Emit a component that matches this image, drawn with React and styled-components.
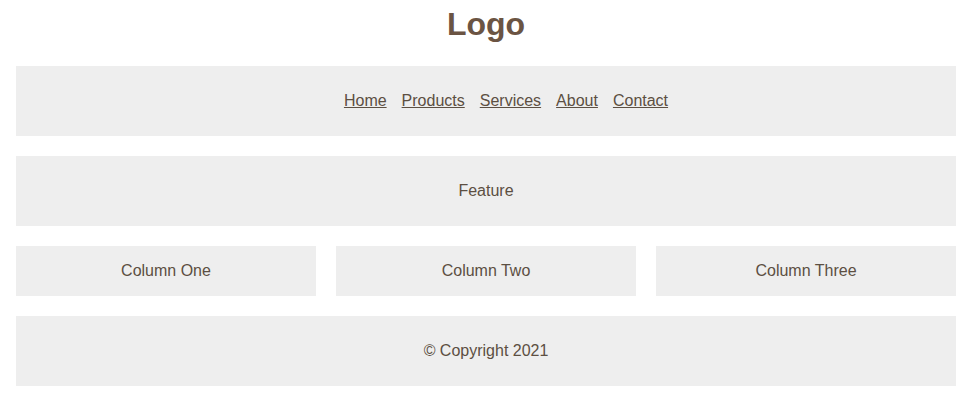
import styled, { createGlobalStyle } from "styled-components";

const GlobalStyle = createGlobalStyle`
  body {
    margin: 0;
    background: #fff;
    font-family: "Liberation Sans", Arial, sans-serif;
    color: #5c4f42;
  }
`;

const Page = styled.div`
  width: 940px;
  margin: 0 16px;
  padding-top: 6px;
  display: flex;
  flex-direction: column;
  gap: 20px;
`;

const Logo = styled.h1`
  margin: 0 0 3px;
  font-size: 32px;
  line-height: 37px;
  font-weight: bold;
  text-align: center;
  color: #6b5443;
`;

const Panel = styled.div`
  background: #eeeeee;
  height: ${props => props.h || 70}px;
  display: flex;
  align-items: center;
  justify-content: center;
  font-size: 16px;
`;

const Menu = styled.ul`
  list-style: none;
  margin: 0;
  padding: 0 0 0 40px;
  display: flex;
  gap: 15px;
`;

const NavLink = styled.a`
  color: #5c4f42;
  text-decoration: underline;
  font-size: 16px;
`;

const Columns = styled.div`
  display: grid;
  grid-template-columns: repeat(3, 1fr);
  gap: 20px;
`;

function App() {
  const links = ["Home", "Products", "Services", "About", "Contact"];
  return (
    <>
      <GlobalStyle />
      <Page>
        <Logo>Logo</Logo>
        <Panel>
          <Menu>
            {links.map(l => (
              <li key={l}>
                <NavLink href="#">{l}</NavLink>
              </li>
            ))}
          </Menu>
        </Panel>
        <Panel>Feature</Panel>
        <Columns>
          <Panel h={50}>Column One</Panel>
          <Panel h={50}>Column Two</Panel>
          <Panel h={50}>Column Three</Panel>
        </Columns>
        <Panel>© Copyright 2021</Panel>
      </Page>
    </>
  );
}

export default App;
